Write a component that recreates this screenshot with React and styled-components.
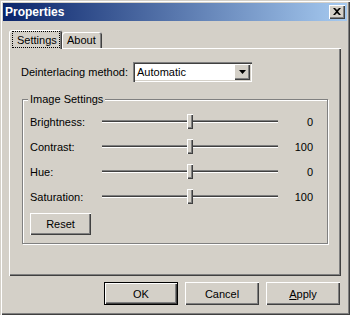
import styled, { createGlobalStyle } from 'styled-components';

const GlobalStyle = createGlobalStyle`
  body {
    margin: 0;
    background: #d4d0c8;
    font-family: "Liberation Sans", Arial, sans-serif;
    font-size: 11px;
    color: #000;
  }
`;

const raised = `
  box-shadow: inset 1px 1px #fff, inset -1px -1px #404040, inset -2px -2px #808080;
`;

const Window = styled.div`
  width: 350px;
  height: 315px;
  box-sizing: border-box;
  padding: 3px;
  background: #d4d0c8;
  box-shadow: inset 1px 1px #d4d0c8, inset 2px 2px #fff, inset -1px -1px #404040, inset -2px -2px #808080;
  display: flex;
  flex-direction: column;
`;

const TitleBar = styled.div`
  height: 18px;
  display: flex;
  align-items: center;
  justify-content: space-between;
  padding: 0 2px 0 2px;
  background: linear-gradient(to right, #0a246a, #a6caf0);
`;

const Title = styled.span`
  color: #fff;
  font-weight: bold;
  font-size: 12px;
`;

const CloseButton = styled.div`
  width: 16px;
  height: 14px;
  box-sizing: border-box;
  background: #d4d0c8;
  ${raised}
  display: flex;
  align-items: center;
  justify-content: center;
  padding-bottom: 1px;
`;

const Body = styled.div`
  display: flex;
  flex-direction: column;
  padding: 9px 6px 0 6px;
`;

const TabStrip = styled.div`
  display: flex;
  align-items: flex-end;
  height: 18px;
`;

const Tab = styled.div`
  box-sizing: border-box;
  width: ${p => p.$w}px;
  height: ${p => (p.$active ? 19 : 16)}px;
  margin-bottom: ${p => (p.$active ? -1 : 0)}px;
  padding: ${p => (p.$active ? '1px 2px 1px 3px' : '0 2px 0 5px')};
  border-radius: 3px 3px 0 0;
  background: #d4d0c8;
  box-shadow: inset 1px 1px #fff, inset -1px 0 #404040, inset -2px 0 #808080;
  position: relative;
  z-index: ${p => (p.$active ? 1 : 0)};
  display: flex;
  align-items: center;
`;

const FocusLabel = styled.span`
  flex: 1;
  height: 100%;
  box-sizing: border-box;
  border: 1px dotted #000;
  display: flex;
  align-items: center;
  padding-left: 4px;
`;

const Panel = styled.div`
  box-sizing: border-box;
  height: 228px;
  padding: 14px 13px 0 12px;
  box-shadow: inset 1px 1px #fff, inset -1px -1px #404040, inset -2px -2px #808080;
`;

const FieldRow = styled.div`
  display: flex;
  align-items: center;
  height: 20px;
`;

const FieldLabel = styled.span`
  width: 112px;
`;

const Combo = styled.div`
  width: 119px;
  height: 20px;
  box-sizing: border-box;
  background: #fff;
  box-shadow: inset 1px 1px #808080, inset 2px 2px #404040, inset -1px -1px #fff, inset -2px -2px #d4d0c8;
  display: flex;
  align-items: center;
  justify-content: space-between;
  padding: 2px 2px 2px 4px;
`;

const DropButton = styled.div`
  width: 16px;
  height: 16px;
  box-sizing: border-box;
  background: #d4d0c8;
  ${raised}
  display: flex;
  align-items: center;
  justify-content: center;
`;

const Group = styled.fieldset`
  width: 306px;
  box-sizing: border-box;
  margin: 11px 0 0 1px;
  padding: 3px 8px 8px 7px;
  border: 1px solid #808080;
  box-shadow: inset 1px 1px #fff, 1px 1px #fff;
`;

const Legend = styled.legend`
  margin-left: -2px;
  padding: 0 2px;
  background: #d4d0c8;
  line-height: 13px;
`;

const SliderRow = styled.div`
  display: grid;
  grid-template-columns: 72px 176px 35px;
  align-items: center;
  height: 25px;
`;

const Slider = styled.div`
  position: relative;
  height: 21px;
  display: flex;
  align-items: center;
`;

const Channel = styled.div`
  width: 100%;
  height: 3px;
  box-sizing: border-box;
  border-top: 1px solid #808080;
  background: #404040;
  border-bottom: 1px solid #fff;
`;

const Thumb = styled.div`
  position: absolute;
  top: 3px;
  width: 6px;
  height: 15px;
  box-sizing: border-box;
  background: #d4d0c8;
  ${raised}
`;

const Value = styled.span`
  text-align: right;
`;

const Button = styled.button`
  width: ${p => p.$w || 74}px;
  height: ${p => p.$h || 23}px;
  box-sizing: border-box;
  border: none;
  background: #d4d0c8;
  font: inherit;
  color: #000;
  padding: 0;
  box-shadow: ${p =>
    p.$default
      ? 'inset 1px 1px #000, inset -1px -1px #000, inset 2px 2px #fff, inset -2px -2px #404040, inset -3px -3px #808080'
      : 'inset 1px 1px #fff, inset -1px -1px #404040, inset -2px -2px #808080'};
`;

const ResetButton = styled(Button)`
  margin-top: 4px;
  display: block;
`;

const ButtonRow = styled.div`
  display: flex;
  justify-content: flex-end;
  gap: 7px;
  margin-top: 6px;
  padding-right: 1px;
`;

const sliders = [
  { label: 'Brightness:', value: 0 },
  { label: 'Contrast:', value: 100 },
  { label: 'Hue:', value: 0 },
  { label: 'Saturation:', value: 100 },
];

export default function App() {
  return (
    <>
      <GlobalStyle />
      <Window>
        <TitleBar>
          <Title>Properties</Title>
          <CloseButton>
            <svg width="8" height="7" viewBox="0 0 8 7">
              <path d="M0 0h2l2 2 2-2h2L5 3.5 8 7H6L4 5 2 7H0l3-3.5z" fill="#000" />
            </svg>
          </CloseButton>
        </TitleBar>
        <Body>
          <TabStrip>
            <Tab $active $w={53}>
              <FocusLabel>Settings</FocusLabel>
            </Tab>
            <Tab $w={40}>About</Tab>
          </TabStrip>
          <Panel>
            <FieldRow>
              <FieldLabel>Deinterlacing method:</FieldLabel>
              <Combo>
                <span>Automatic</span>
                <DropButton>
                  <svg width="7" height="4" viewBox="0 0 7 4">
                    <path d="M0 0h7L3.5 4z" fill="#000" />
                  </svg>
                </DropButton>
              </Combo>
            </FieldRow>
            <Group>
              <Legend>Image Settings</Legend>
              {sliders.map((s, i) => (
                <SliderRow key={i}>
                  <span>{s.label}</span>
                  <Slider>
                    <Channel />
                    <Thumb style={{ left: 'calc(50% - 3px)' }} />
                  </Slider>
                  <Value>{s.value}</Value>
                </SliderRow>
              ))}
              <ResetButton $w={61} $h={22}>Reset</ResetButton>
            </Group>
          </Panel>
          <ButtonRow>
            <Button $default>OK</Button>
            <Button>Cancel</Button>
            <Button><u>A</u>pply</Button>
          </ButtonRow>
        </Body>
      </Window>
    </>
  );
}
